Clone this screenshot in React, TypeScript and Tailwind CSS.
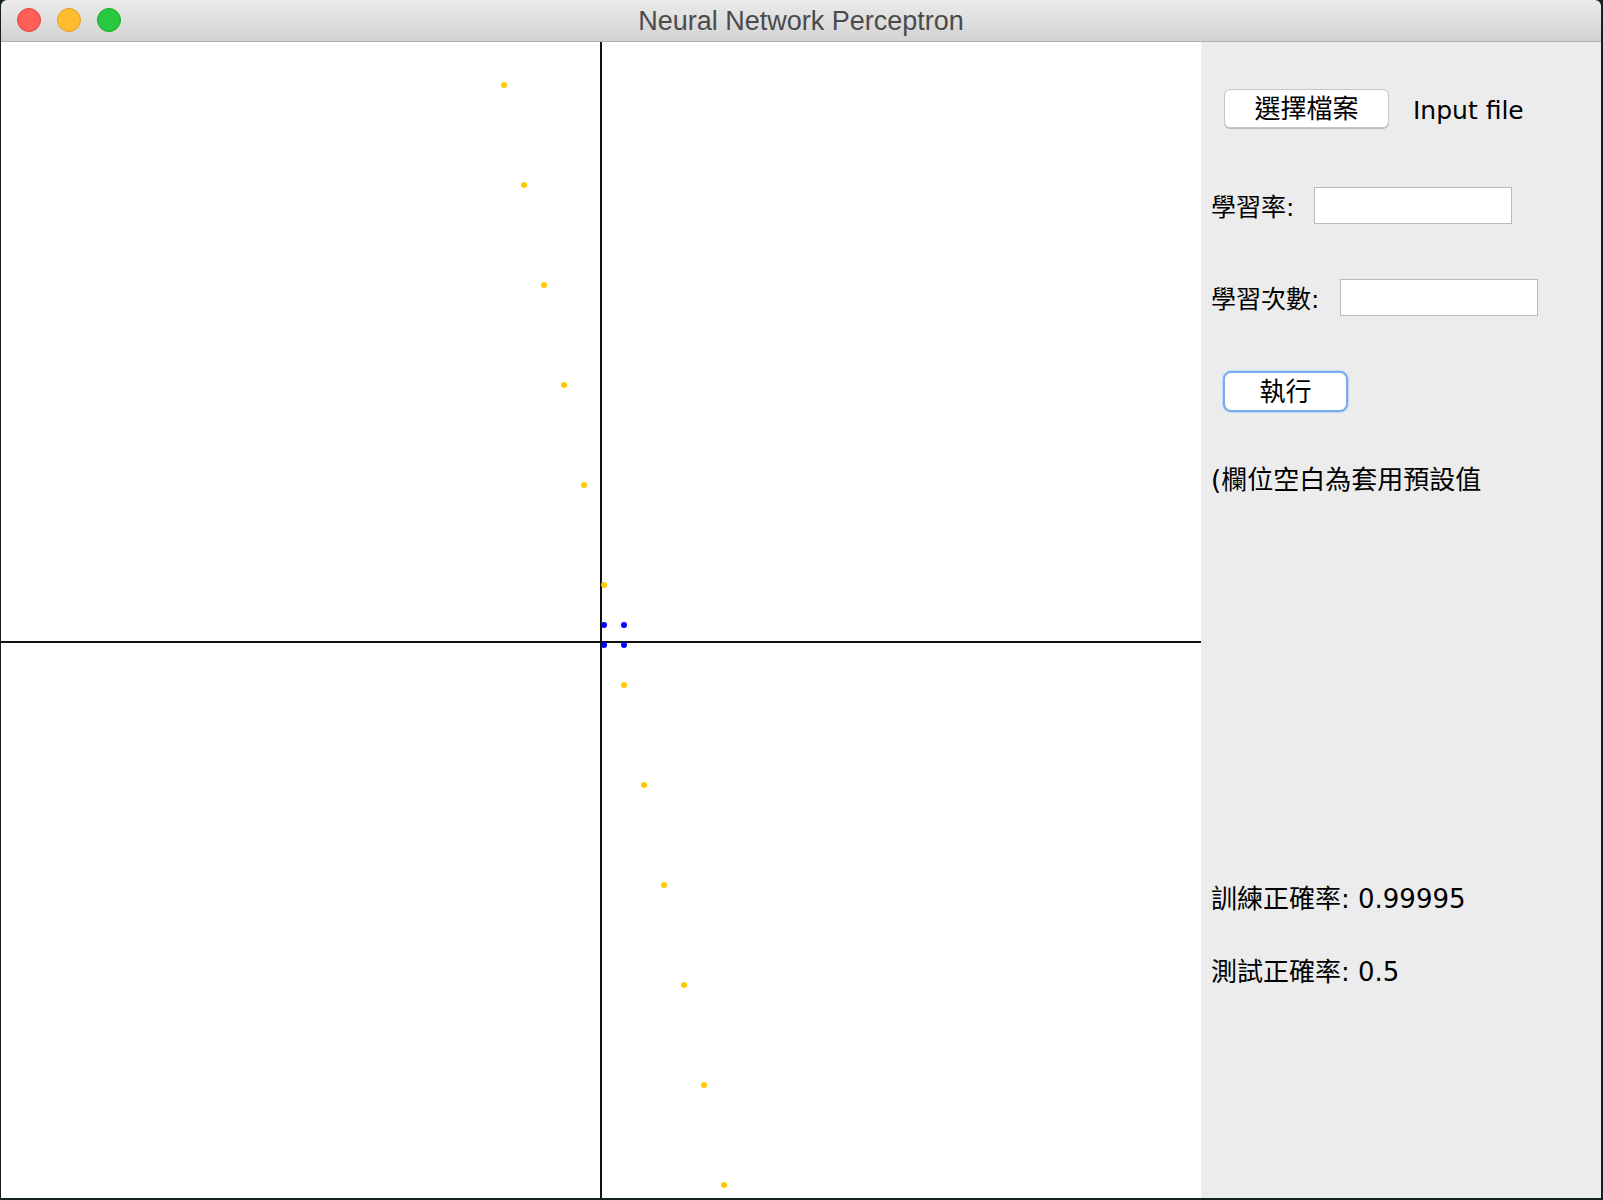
import React from "react";

const yellowPoints = Array.from({ length: 12 }, (_, i) => {
    const x = i - 5;
    return { x, y: 3 - 5 * x };
});
const bluePoints = [
    { x: 0, y: 0 },
    { x: 1, y: 0 },
    { x: 0, y: 1 },
    { x: 1, y: 1 },
];

const font = { fontFamily: '"DejaVu Sans", "Noto Sans CJK TC", sans-serif' };

function Plot() {
    // origin at (600, 600), 20px per unit, dots drawn from their top-left like fillOval
    const cx = (x: number) => 600 + 20 * x + 3;
    const cy = (y: number) => 600 - 20 * y + 3;
    return (
        <svg width={1200} height={1156} className="block">
            <rect x={0} y={0} width={1200} height={1156} fill="#ffffff" />
            <line x1={600} y1={0} x2={600} y2={1156} stroke="#111" strokeWidth={2} />
            <line x1={0} y1={600} x2={1200} y2={600} stroke="#111" strokeWidth={2} />
            {yellowPoints.map((p) => (
                <circle key={`y${p.x}`} cx={cx(p.x)} cy={cy(p.y)} r={3} fill="#ffc800" />
            ))}
            {bluePoints.map((p) => (
                <circle key={`b${p.x}${p.y}`} cx={cx(p.x)} cy={cy(p.y)} r={3} fill="#0000ff" />
            ))}
        </svg>
    );
}

function TitleBar() {
    return (
        <div className="relative h-[42px] shrink-0 flex items-center justify-center bg-gradient-to-b from-[#ebebeb] to-[#d2d2d2] border-b border-[#afafaf] rounded-t-[6px]">
            <div className="absolute left-[16px] top-[8px] flex gap-[16px]">
                <span className="w-[24px] h-[24px] rounded-full bg-[#fe5f57] border border-[#e0443e]" />
                <span className="w-[24px] h-[24px] rounded-full bg-[#febc2e] border border-[#dea123]" />
                <span className="w-[24px] h-[24px] rounded-full bg-[#28c840] border border-[#1aab29]" />
            </div>
            <span
                className="text-[27px] leading-none text-[#4b4b4b] pt-[1px]"
                style={{ fontFamily: '"Liberation Sans", Arial, sans-serif' }}
            >
                Neural Network Perceptron
            </span>
        </div>
    );
}

function SidePanel() {
    return (
        <div className="w-[400px] bg-[#ececec] flex flex-col text-[25px] text-black" style={font}>
            {/* file row */}
            <div className="mt-[47px] h-[39px] flex items-center">
                <button className="ml-[23px] w-[165px] h-[39px] bg-white border border-[#c6c6c6] rounded-[6px] shadow-[0_1px_0_#bdbdbd] text-[26px] leading-none flex items-center justify-center">
                    選擇檔案
                </button>
                <span className="ml-[24px] leading-none pt-[4px]">Input file</span>
            </div>

            {/* learning rate */}
            <div className="mt-[59px] h-[37px] flex items-center pl-[10px]">
                <span className="w-[103px] leading-none pt-[4px]">學習率:</span>
                <div className="w-[198px] h-[37px] bg-white border border-[#b9b9b9]" />
            </div>

            {/* epochs */}
            <div className="mt-[55px] h-[37px] flex items-center pl-[10px]">
                <span className="w-[129px] leading-none pt-[4px]">學習次數:</span>
                <div className="w-[198px] h-[37px] bg-white border border-[#b9b9b9]" />
            </div>

            {/* run */}
            <div className="mt-[55px] h-[41px] flex items-center">
                <button className="ml-[22px] w-[125px] h-[41px] bg-white border-[2px] border-[#7aabf0] rounded-[8px] shadow-[0_0_0_1px_#c2d8f8] text-[26px] leading-none flex items-center justify-center">
                    執行
                </button>
            </div>

            <div className="mt-[48px] h-[36px] flex items-center pl-[10px] text-[26px] leading-none pt-[4px]">
                (欄位空白為套用預設值
            </div>

            <div className="mt-[383px] h-[36px] flex items-center pl-[10px] text-[26px] leading-none pt-[4px]">
                訓練正確率: 0.99995
            </div>

            <div className="mt-[37px] h-[36px] flex items-center pl-[10px] text-[26px] leading-none pt-[4px]">
                測試正確率: 0.5
            </div>
        </div>
    );
}

export default function App() {
    return (
        <div className="w-[1603px] h-[1200px] bg-[#152022] pl-[1px] overflow-hidden">
            <div className="w-[1600px] h-[1198px] flex flex-col">
                <TitleBar />
                <div className="flex flex-1 min-h-0">
                    <Plot />
                    <SidePanel />
                </div>
            </div>
        </div>
    );
}
